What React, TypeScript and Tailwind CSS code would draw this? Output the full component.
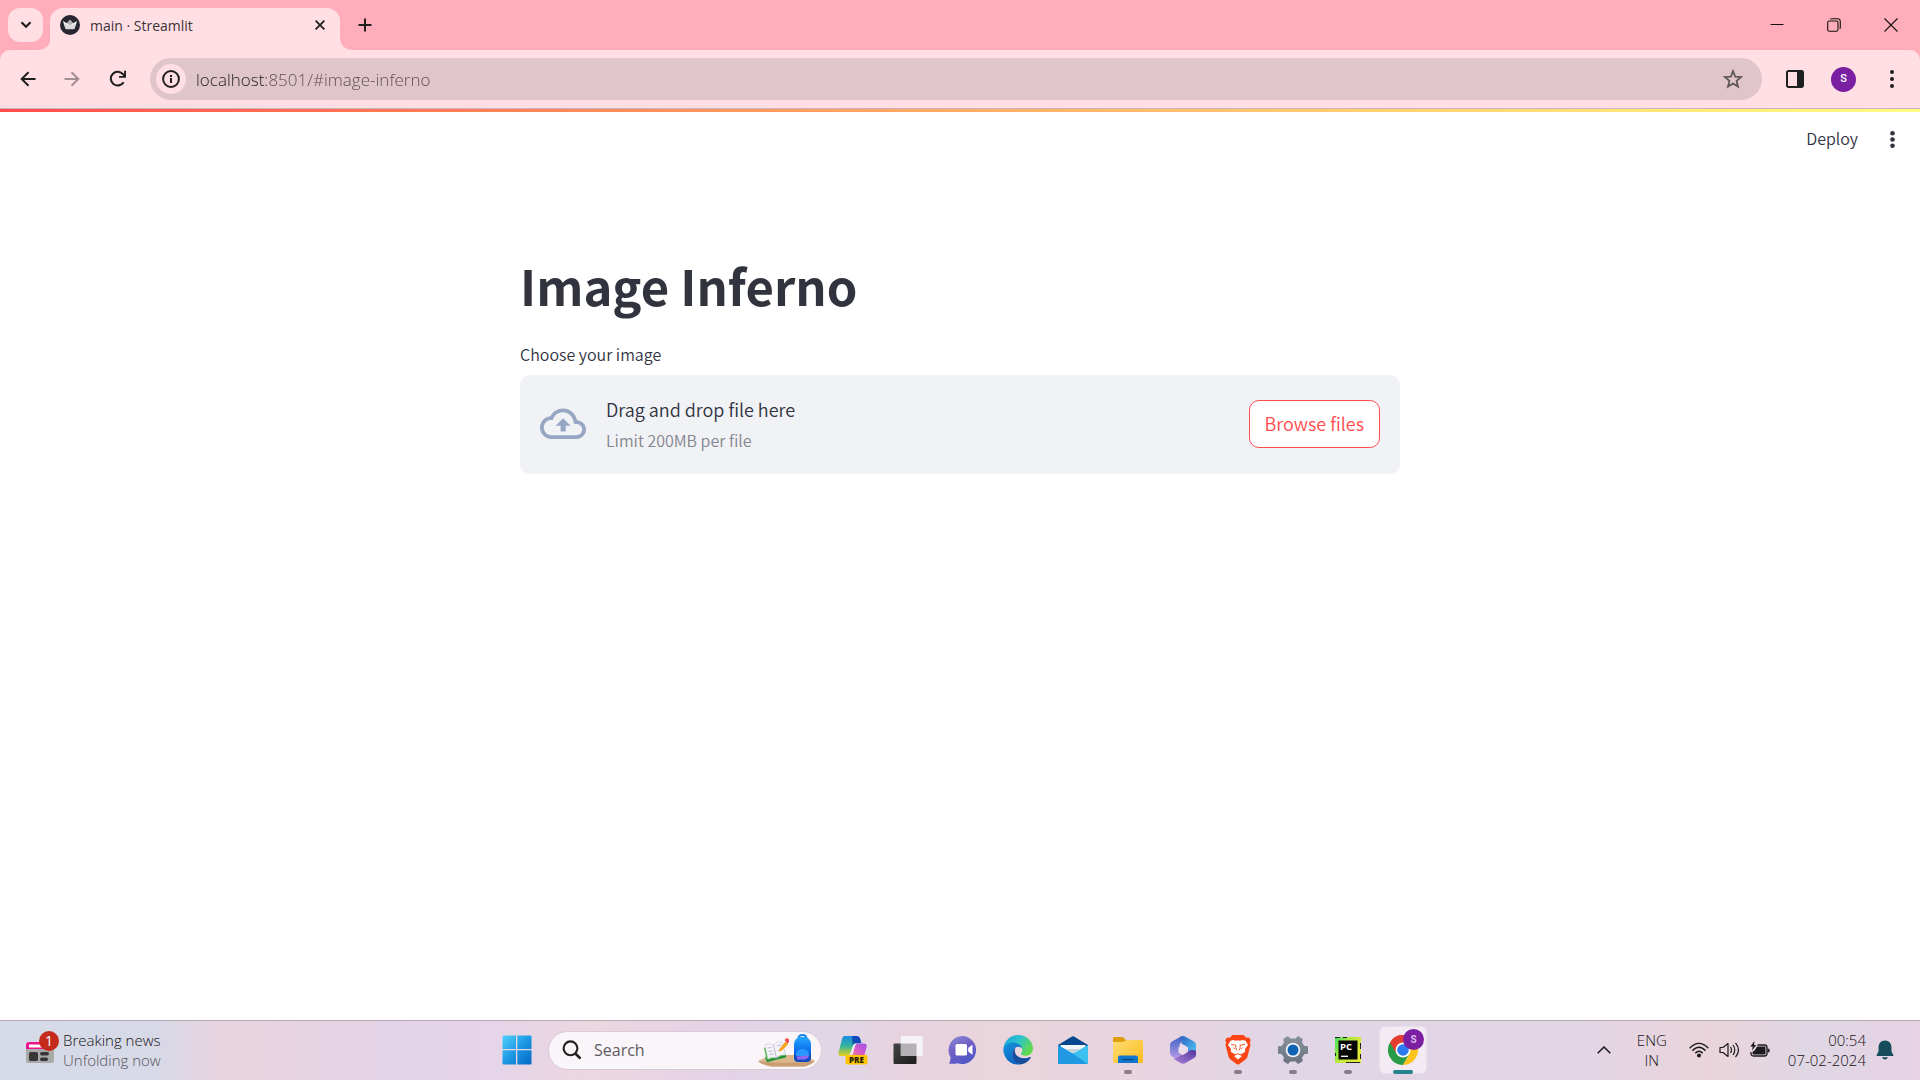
import React, { useRef } from "react";

const ICON = "flex h-12 w-12 shrink-0 items-center justify-center rounded-md";

function StreamlitLogo() {
  return (
    <svg viewBox="0 0 20 20" className="h-5 w-5 shrink-0" aria-hidden="true">
      <circle cx="10" cy="10" r="10" fill="#262730" />
      <path d="M2.800 6 7 8.300 10 4.800 13 8.300 17.200 6 15.200 11 4.800 11Z" fill="#f4f4f4" />
      <path d="M3.600 8.500 10 10.600 16.400 8.500 14.800 13.300Q14.500 14.300 13.600 14.300L6.400 14.300Q5.500 14.300 5.200 13.300Z" fill="#dcdcde" />
      <path d="M7 8.300 10 4.800 13 8.300 10 10.200Z" fill="#b0b1b5" />
    </svg>
  );
}

function TabStrip() {
  return (
    <div className="flex h-[50px] items-end bg-[#ffadbb]">
      <button aria-label="Search tabs" className="mb-2 ml-2 flex h-[34px] w-[35px] shrink-0 items-center justify-center rounded-xl bg-[#ffdee4]">
        <svg viewBox="0 0 12 8" className="h-2 w-3" fill="none" stroke="#1f1f1f" strokeWidth="2.2"><path d="M1.5 1.2 6 5.7 10.5 1.2" /></svg>
      </button>
      <div className="flex h-[42px] shrink-0 items-end">
        <svg viewBox="0 0 14 14" className="-mr-px ml-[-7px] h-[14px] w-[15px]" preserveAspectRatio="none" aria-hidden="true"><path d="M14 0V14H0Q14 14 14 0Z" fill="#ffdee4" /></svg>
        <div className="flex h-[42px] w-[290px] items-center rounded-t-[13px] bg-[#ffdee4] pr-[10px] pb-2 pl-[10px]">
          <StreamlitLogo />
          <span className="ml-[10px] flex-1 font-['Open_Sans','Noto_Sans',sans-serif] text-[14px] text-[#3b3437]">main · Streamlit</span>
          <button aria-label="Close tab" className="flex h-5 w-5 items-center justify-center">
            <svg viewBox="0 0 10 10" className="h-[10px] w-[10px]" stroke="#1f1f1f" strokeWidth="1.8"><path d="M.6.6 9.4 9.4M9.4.6.6 9.4" /></svg>
          </button>
        </div>
        <svg viewBox="0 0 14 14" className="h-[14px] w-[14px]" aria-hidden="true"><path d="M0 0V14H14Q0 14 0 0Z" fill="#ffdee4" /></svg>
      </div>
      <button aria-label="New tab" className="mb-[15px] ml-[1px] flex h-5 w-5 items-center justify-center">
        <svg viewBox="0 0 14 14" className="h-[14px] w-[14px]" stroke="#1f1f1f" strokeWidth="2"><path d="M7 .5V13.5M.5 7H13.5" /></svg>
      </button>
      <div className="ml-auto flex h-[50px] items-center">
        <button aria-label="Minimize" className="flex h-full w-[57px] items-center justify-center">
          <svg viewBox="0 0 14 14" className="h-[14px] w-[14px]" stroke="#111"><path d="M.5 6.5H13.5" /></svg>
        </button>
        <button aria-label="Restore" className="flex h-full w-[57px] items-center justify-center">
          <svg viewBox="0 0 14 14" className="h-[14px] w-[14px]" fill="none" stroke="#111" strokeWidth="1.1"><rect x=".7" y="3" width="10.3" height="10.3" rx="1.6" /><path d="M3.2 1.2Q3.8.7 5 .7H10.5Q13.3.7 13.3 3.5V9Q13.3 10.2 12.8 10.8" /></svg>
        </button>
        <button aria-label="Close window" className="flex h-full w-[58px] items-center justify-center">
          <svg viewBox="0 0 14 14" className="h-[14px] w-[14px]" stroke="#111" strokeWidth="1.1"><path d="M.5.5 13.5 13.5M13.5.5.5 13.5" /></svg>
        </button>
      </div>
    </div>
  );
}

function Toolbar() {
  return (
    <div className="bg-[#ffadbb]">
      <div className="flex h-[58px] items-center rounded-t-[10px] bg-[#ffdee4]">
        <button aria-label="Back" className="ml-[18px] flex h-5 w-5 items-center justify-center">
          <svg viewBox="0 0 16 16" className="h-4 w-4" fill="none" stroke="#1f1f1f" strokeWidth="2"><path d="M15.5 8H2M8.5 1.2 1.7 8 8.5 14.8" /></svg>
        </button>
        <button aria-label="Forward" className="ml-6 flex h-5 w-5 items-center justify-center">
          <svg viewBox="0 0 16 16" className="h-4 w-4" fill="none" stroke="#a38f94" strokeWidth="2"><path d="M.5 8H14M7.5 1.2 14.3 8 7.5 14.8" /></svg>
        </button>
        <button aria-label="Reload" className="ml-[26px] flex h-5 w-5 items-center justify-center">
          <svg viewBox="0 0 18 18" className="h-[18px] w-[18px]"><path d="M14.6 12.2A6.9 6.9 0 1 1 14.2 4.4L15.8 6" fill="none" stroke="#1f1f1f" strokeWidth="2.1" /><path d="M17 .8V7.8H10V5.9H15.1V.8Z" fill="#1f1f1f" /></svg>
        </button>
        <div className="ml-[22px] flex h-[42px] flex-1 items-center rounded-full bg-[#e0c5ca] pr-[18px] pl-[6px]">
          <button aria-label="Site information" className="flex h-[30px] w-[30px] shrink-0 items-center justify-center rounded-full bg-[#ffdee4]">
            <svg viewBox="0 0 18 18" className="h-[18px] w-[18px]"><circle cx="9" cy="9" r="7.9" fill="none" stroke="#1f1f1f" strokeWidth="2" /><path d="M8 8H10V13H8ZM8 5H10V7H8Z" fill="#1f1f1f" /></svg>
          </button>
          <input
            aria-label="Address"
            defaultValue="localhost:8501/#image-inferno"
            className="ml-[10px] min-w-0 flex-1 bg-[linear-gradient(90deg,#1f1c22_70px,#5a4b50_70px)] bg-clip-text pt-px font-['Open_Sans','Noto_Sans',sans-serif] text-[17px] font-[350] text-transparent caret-black outline-none"
          />
          <button aria-label="Bookmark this tab" className="flex h-[22px] w-[22px] items-center justify-center">
            <svg viewBox="0 0 20 20" className="h-5 w-5" fill="none" stroke="#5f5759" strokeWidth="1.8"><path d="M10 2.2 12.2 7.6 18 8.1 13.6 11.9 15 17.6 10 14.5 5 17.6 6.4 11.9 2 8.1 7.8 7.6Z" /></svg>
          </button>
        </div>
        <button aria-label="Side panel" className="ml-6 flex h-[18px] w-[18px] items-center justify-center">
          <svg viewBox="0 0 18 18" className="h-[18px] w-[18px]"><rect x="1" y="1" width="16" height="16" rx="1.4" fill="none" stroke="#1f1f1f" strokeWidth="2" /><path d="M11 1H17V17H11Z" fill="#1f1f1f" /></svg>
        </button>
        <button aria-label="Profile" className="ml-[27px] flex h-[25px] w-[25px] items-center justify-center rounded-full bg-[#7b1fa2] font-[Roboto,sans-serif] text-[11px] font-medium text-white">S</button>
        <button aria-label="Chrome menu" className="mr-[18px] ml-[26px] flex h-5 w-5 items-center justify-center">
          <svg viewBox="0 0 4 18" className="h-[18px] w-1" fill="#1f1f1f"><circle cx="2" cy="2" r="2" /><circle cx="2" cy="9" r="2" /><circle cx="2" cy="16" r="2" /></svg>
        </button>
      </div>
      <div className="h-px bg-[#ccb2bd]" />
    </div>
  );
}

function Page() {
  const file = useRef<HTMLInputElement>(null);
  return (
    <div className="flex-1 bg-white font-['Source_Sans_Pro','Noto_Sans_CJK_SC',sans-serif] font-[350] text-[#31333f]">
      <div className="h-[3px] bg-linear-to-r from-[#ff4b4b] to-[#fffd80]" />
      <header className="flex h-[54px] items-center justify-end pr-[18px]">
        <button className="pb-[2px] text-[16px] leading-6">Deploy</button>
        <button aria-label="Main menu" className="ml-6 flex h-5 w-5 items-center justify-center">
          <svg viewBox="0 0 5 17" className="h-[17px] w-[5px]" fill="#31333f"><circle cx="2.5" cy="2.3" r="2.3" /><circle cx="2.5" cy="8.5" r="2.3" /><circle cx="2.5" cy="14.7" r="2.3" /></svg>
        </button>
      </header>
      <main className="mx-auto max-w-[880px] pt-[86px]">
        <h1 className="pb-[23px] text-[49px] leading-[66px] font-bold">Image Inferno</h1>
        <label htmlFor="upload" className="block h-[30px] pb-1 text-[16px] leading-[26px]">Choose your image</label>
        <section className="mt-1 flex h-[99px] items-center rounded-[10px] bg-[#f0f2f6] px-5">
          <svg viewBox="0 0 46 32" className="mb-px h-8 w-[46px] shrink-0" aria-hidden="true">
            <path d="M37 12.2C35.7 5.400 30 .5 23 .5 17.400 .5 12.600 3.700 10.200 8.300 4.400 8.900 0 13.800 0 19.500 0 25.800 5.200 31 11.500 31H36.500C41.700 31 46 26.700 46 21.500 46 16.500 42.100 12.500 37 12.200ZM36.500 27.200H11.500C7.300 27.200 3.800 23.800 3.800 19.500 3.800 15.600 6.700 12.500 10.600 12.100L12.700 11.900 13.600 10C15.400 6.500 19 4.300 23 4.300 28.100 4.300 32.300 7.900 33.300 12.900L33.900 15.800 36.800 16C39.800 16.200 42.200 18.600 42.200 21.500 42.200 24.700 39.600 27.200 36.500 27.200ZM15.700 17.700H20.600V23.500H25.700V17.700H30.600L23.100 10.300Z" fill="#97a6c3" />
          </svg>
          <div className="ml-5 flex-1">
            <p className="text-[18px] leading-[31px]">Drag and drop file here</p>
            <p className="text-[16px] leading-[30px] text-[#84858e]">Limit 200MB per file</p>
          </div>
          <input ref={file} id="upload" type="file" className="hidden" />
          <button onClick={() => file.current?.click()} className="mb-px h-12 rounded-[10px] border border-[#ff4b4b] bg-white px-[15px] pb-[2px] text-[18px] leading-6 text-[#ff4b4b]">Browse files</button>
        </section>
      </main>
    </div>
  );
}

function Dot() {
  return <span className="absolute bottom-0 left-5 h-1 w-2 rounded-full bg-[#887c86]" />;
}

function TaskbarApps() {
  return (
    <nav aria-label="Taskbar" className="flex items-center gap-[7px]">
      <button aria-label="Start" className={ICON}>
        <svg viewBox="0 0 30 30" className="h-[30px] w-[30px]">
          <defs><linearGradient id="win" x1="0" y1="0" x2="1" y2="1"><stop offset="0" stopColor="#52d2fb" /><stop offset=".5" stopColor="#1b98e4" /><stop offset="1" stopColor="#0568c4" /></linearGradient></defs>
          <path d="M1.500.5H14V14H.5V1.500Q.5.5 1.500.5ZM15.300.5H28.500Q29.500.5 29.500 1.500V14H15.300ZM.5 15.300H14V29.500H1.500Q.5 29.500.5 28.500ZM15.300 15.300H29.500V28.500Q29.500 29.500 28.500 29.500H15.300Z" fill="url(#win)" />
        </svg>
      </button>
      <label className="flex h-[39px] w-[274px] items-center rounded-full border border-[#d9cbd6] bg-[#f9f5f9] pr-[6px] pl-[13px]">
        <svg viewBox="0 0 20 20" className="h-5 w-5 shrink-0" fill="none" stroke="#222" strokeWidth="2.1"><circle cx="8.500" cy="8.300" r="6.900" /><path d="M13.400 13.500 18.500 18.700" strokeWidth="2.600" /></svg>
        <input aria-label="Search" placeholder="Search" className="ml-3 min-w-0 flex-1 bg-transparent font-['Open_Sans','Noto_Sans',sans-serif] text-[16px] font-normal outline-none placeholder:text-[#5f5c60]" />
        <svg viewBox="0 0 58 34" className="h-[34px] w-[58px] shrink-0" aria-hidden="true">
          <defs><linearGradient id="bag" x1="0" y1="0" x2="0" y2="1"><stop offset="0" stopColor="#22a7ff" /><stop offset=".6" stopColor="#0a6be8" /><stop offset="1" stopColor="#0b3fae" /></linearGradient></defs>
          <path d="M14 22H47L58 28Q54 32 48 33.500H14Q5 32 1 28Z" fill="#dcb88c" /><path d="M1 28Q30 31.500 58 28 54 32 48 33.500H14Q5 32 1 28Z" fill="#c89f74" />
          <path d="M7 15 25 10.500 29.500 24.500 10 29Z" fill="#4fbd45" /><path d="M7.500 23 10 29 29 24 29 22 11 27Z" fill="#218c3b" />
          <path d="M8 12Q12 9.500 16.500 12 20 8 25 9L28.500 22Q23 21 19.500 25 14.500 23 11 26Z" fill="#f6f4fb" stroke="#c9c4d8" strokeWidth=".6" /><path d="M16.500 12 19.500 25M10.500 15 14.500 14.500M11.500 18.500 15.500 18M12.500 21.500 16.500 21M20 13 24 12M21 17.500 25 16.500" stroke="#a9a5bd" strokeWidth=".8" />
          <path d="M22.500 16 28.500 8.500 31 11.500 25 17.500 21.800 18.500Z" fill="#f8a51b" /><path d="M27.500 7Q29.500 4 32 6.500 32.500 8.500 30.500 11Z" fill="#f05252" />
          <path d="M41.500 6Q41.500 2 45.500 2T49.500 6" fill="none" stroke="#1684e8" strokeWidth="2" /><rect x="37" y="4" width="17" height="24.500" rx="7" fill="url(#bag)" /><path d="M37 21H54V25Q54 29 50 29H41Q37 29 37 25Z" fill="#124ec2" /><path d="M39 23V21Q40 16 45.500 16T52 21V23Z" fill="#2897ff" /><path d="M39.500 23.500 51.500 22.500V24.500L48 26.500H40.500Z" fill="#9068f4" />
        </svg>
      </label>
      <button aria-label="Copilot" className={ICON}>
        <svg viewBox="0 0 30 30" className="h-[30px] w-[30px]">
          <defs><linearGradient id="cp1" x1="0" y1="0" x2="0" y2="1"><stop offset="0" stopColor="#1a8be6" /><stop offset=".5" stopColor="#35b59a" /><stop offset="1" stopColor="#e8d01b" /></linearGradient><linearGradient id="cp2" x1="1" y1="0" x2="0" y2="1"><stop offset="0" stopColor="#9b4fe8" /><stop offset=".5" stopColor="#d95bc9" /><stop offset="1" stopColor="#ff9463" /></linearGradient></defs>
          <path d="M6.500 1H18.500Q21.500 1 22.500 5L23.500 8.500H18.500Q15.500 8.500 14.500 12L12.500 18Q11.500 21 8 21H3.500Q-.5 21 .7 17L4 4Q4.800 1 6.500 1Z" fill="url(#cp1)" /><path d="M14 1H18.500Q21.500 1 22.500 5L23.300 8H18Q15.500 8 14.700 10Z" fill="#124abb" />
          <path d="M18.500 8.500H25.500Q29.500 8.500 28.500 12.500L26.500 19.500Q25.500 23 22 23H11Q14 22 15 18.500L17 11Q17.600 9 18.500 8.500Z" fill="url(#cp2)" />
          <path d="M16 9.500Q17 8.300 18.500 8.500 17.300 9 16.800 11L15 18Q14 20.500 12 20.500H10.500Q12 20 12.700 18L14.500 12Q15 10.300 16 9.500Z" fill="#f0e8f4" />
          <rect x="7.500" y="20" width="22" height="9.500" rx="2" fill="#ffc400" /><text x="18.500" y="27.600" textAnchor="middle" fontFamily="Open Sans" fontSize="8" fontWeight="800" fill="#2a2205">PRE</text>
        </svg>
      </button>
      <button aria-label="Task view" className={ICON}>
        <svg viewBox="0 0 30 30" className="h-[30px] w-[30px]">
          <defs><linearGradient id="tv" x1="0" y1="0" x2="1" y2="1"><stop offset="0" stopColor="#454545" /><stop offset="1" stopColor="#1c1c1c" /></linearGradient></defs>
          <rect x=".5" y="8.500" width="23" height="20.500" rx="1" fill="url(#tv)" /><rect x="7.800" y="1" width="22" height="20" rx="1" fill="#f5f3f5" /><path d="M7.800 8.500H23.500V21H7.800Z" fill="#b4b2b4" />
        </svg>
      </button>
      <button aria-label="Chat" className={ICON}>
        <svg viewBox="0 0 30 30" className="h-[30px] w-[30px]">
          <defs><linearGradient id="ch" x1="0" y1="0" x2=".5" y2="1"><stop offset="0" stopColor="#8a8fd6" /><stop offset=".5" stopColor="#7260c6" /><stop offset="1" stopColor="#5058c8" /></linearGradient></defs>
          <path d="M15 1A14 14 0 1 1 9.500 28.200Q6 29.300 1 28.600 2.800 26 2.500 22A14 14 0 0 1 15 1Z" fill="url(#ch)" /><rect x="7.500" y="9" width="11.500" height="11.500" rx="1.500" fill="#fff" /><path d="M20.200 13 24 10Q24.500 10 24.500 10.600V19Q24.500 19.500 24 19.500L20.200 16.500Z" fill="#fff" />
        </svg>
      </button>
      <button aria-label="Microsoft Edge" className={ICON}>
        <svg viewBox="0 0 30 30" className="h-[30px] w-[30px]">
          <defs><linearGradient id="ed1" x1="0" y1="0" x2="1" y2=".5"><stop offset="0" stopColor="#18a0d8" /><stop offset=".5" stopColor="#2cc3d0" /><stop offset="1" stopColor="#62d94e" /></linearGradient><linearGradient id="ed2" x1="0" y1="0" x2=".5" y2="1"><stop offset="0" stopColor="#1695dd" /><stop offset="1" stopColor="#0c63be" /></linearGradient></defs>
          <path d="M.5 13C1.500 5.500 7.500 0 15.200 0 23.500 0 30 6 30 13.500 30 18 26.500 20.800 22.500 20.800 19.500 20.800 17.800 19.700 17.800 18.800 17.800 17.900 19.300 17.500 19.300 15 19.300 11.500 15.500 8 9.800 8 5.500 8 2 10 .5 13Z" fill="url(#ed1)" />
          <path d="M.3 15C0 10.500 4.500 7.400 9.500 7.400 15.500 7.400 19.400 11.200 19.400 14.800 19.400 13 17.500 11.600 15.300 11.800 11 12.200 8.500 17 10 21.500 11.300 25.800 15 28.500 19 29.200 8.500 31.500.8 24 .3 15Z" fill="url(#ed2)" />
          <path d="M12.500 12.800C9 15.500 8.500 20.500 10.500 24 13 28.500 17.500 29.700 20.500 28.700 23.700 27.600 26.300 25.300 27.700 22.700 28 22 27.600 21.800 27 22 20 25.200 12.200 22 11.900 16.500 11.800 15.200 12 13.800 12.500 12.800Z" fill="#164e9d" />
        </svg>
      </button>
      <button aria-label="Mail" className={ICON}>
        <svg viewBox="0 0 30 30" className="h-[30px] w-[30px]">
          <path d="M0 10 14 1.500Q15 1 16 1.500L30 10V15H0Z" fill="#07478d" /><path d="M2.500 10H27.500V20H2.500Z" fill="#f3f5f7" /><path d="M8 14 15 18 22 14Z" fill="#c8d0d8" /><path d="M0 10 30 29H1Q0 29 0 28Z" fill="#1793e0" /><path d="M30 10V28Q30 29 29 29H1L15 18.500Z" fill="#3bc0f0" /><path d="M0 10 15 18.500 29.500 29H1Q0 29 0 28Z" fill="#2099e2" />
        </svg>
      </button>
      <button aria-label="File Explorer" className={`${ICON} relative`}>
        <svg viewBox="0 0 30 30" className="h-[30px] w-[30px]">
          <defs><linearGradient id="fe" x1="0" y1="0" x2="1" y2="1"><stop offset="0" stopColor="#ffdf73" /><stop offset="1" stopColor="#fdba20" /></linearGradient></defs>
          <path d="M0 3Q0 2 1 2H10L13 5H29Q30 5 30 6V12H0Z" fill="#dfa010" /><path d="M0 7H10.500L13.500 5H29Q30 5 30 6V28H0Z" fill="url(#fe)" /><path d="M5 28V22.500Q5 20.500 7 20.500H23Q25 20.500 25 22.500V28Z" fill="#1277cc" /><path d="M9 24.500H21" stroke="#07437f" strokeWidth="1.300" />
        </svg>
        <Dot />
      </button>
      <button aria-label="Microsoft 365" className={ICON}>
        <svg viewBox="0 0 30 30" className="h-[30px] w-[30px]">
          <defs><linearGradient id="m1" x1="0" y1="0" x2="0" y2="1"><stop offset="0" stopColor="#3c62c4" /><stop offset="1" stopColor="#c3a0ea" /></linearGradient><linearGradient id="m2" x1="0" y1="0" x2="1" y2="1"><stop offset="0" stopColor="#2d62c4" /><stop offset="1" stopColor="#52c8f3" /></linearGradient><linearGradient id="m3" x1="0" y1="1" x2="1" y2="0"><stop offset="0" stopColor="#b083dd" /><stop offset="1" stopColor="#52379b" /></linearGradient></defs>
          <path d="M13 1.500 17 3 11.500 9.500V18L15 20.500 11 25.500 4 21.500Q2 20.300 2 18V10Q2 7.800 4 6.600Z" fill="url(#m1)" /><path d="M12.500 1.600Q15 .5 17.500 1.800L26 6.600Q28 7.800 28 10V18L20 19V12.500L13.500 8.500Q15 4 12.500 1.600Z" fill="url(#m2)" /><path d="M28 15.500V20Q28 22 26 23L17.500 28Q15 29.300 12.500 28L5 23.500Q7 24 9.500 22.500L20 16.300Q23 14 28 15.500Z" fill="url(#m3)" /><path d="M15 9.800 19.800 12.500V17L15 20 10.500 17.500V12.500Z" fill="#eadcea" />
        </svg>
      </button>
      <button aria-label="Brave" className={`${ICON} relative`}>
        <svg viewBox="0 0 30 30" className="h-[30px] w-[30px]">
          <path d="M9.500 0H20.500L23.200 2.800 25.700 2.500 27.800 5 26.800 7.500 27.500 9.700 24.500 21.500Q24 23.500 22.500 24.500L16.500 29Q15 30 13.500 29L7.500 24.500Q6 23.500 5.500 21.500L2.500 9.700 3.200 7.500 2.200 5 4.300 2.500 6.800 2.800Z" fill="#fb4415" /><path d="M10 5 13 5.800 15 5.300 17 5.800 20 5 22.500 5.800 25 10 21.800 14.200Q23 16 21.500 17.200L18 19.300 16.800 19 15 18.200 13.200 19 12 19.300 8.500 17.200Q7 16 8.200 14.200L5 10 7.500 5.800ZM11 21 15 19.300 19 21 15 24.500Z" fill="#fff" /><path d="M8 9.300 13 10.300 12.800 12.200 13.600 15.500M22 9.300 17 10.300 17.200 12.200 16.400 15.500M10.500 12.500 11.800 14M19.500 12.500 18.200 14" fill="none" stroke="#fb4415" strokeWidth=".9" />
        </svg>
        <Dot />
      </button>
      <button aria-label="Settings" className={`${ICON} relative`}>
        <svg viewBox="0 0 30 30" className="h-[30px] w-[30px]">
          <defs><linearGradient id="gear" x1="0" y1="0" x2="0" y2="1"><stop offset="0" stopColor="#87919b" /><stop offset="1" stopColor="#6a7480" /></linearGradient></defs>
          <path d="M5.800 3.500 9.500 1.300Q10.300 1 10.800 1.800L12.300 3.500H17.700L19.200 1.800Q19.700 1 20.500 1.300L24.200 3.500Q25 4 24.600 5L24 7.500 26.500 11H29Q30 11 30 12V18Q30 19 29 19H26.500L24 22.500 24.600 25Q25 26 24.200 26.500L20.500 28.700Q19.700 29 19.200 28.200L17.700 26.500H12.300L10.800 28.200Q10.300 29 9.500 28.700L5.800 26.500Q5 26 5.400 25L6 22.500 3.500 19H1Q0 19 0 18V12Q0 11 1 11H3.500L6 7.500 5.400 5Q5 4 5.800 3.500Z" fill="url(#gear)" /><circle cx="15" cy="15" r="7.300" fill="#f2f2f5" /><circle cx="15" cy="15" r="5.500" fill="#0e63b4" />
        </svg>
        <Dot />
      </button>
      <button aria-label="PyCharm" className={`${ICON} relative`}>
        <svg viewBox="0 0 30 30" className="h-[30px] w-[30px]">
          <defs><linearGradient id="pc" x1="0" y1="0" x2="1" y2=".6"><stop offset="0" stopColor="#3fe05f" /><stop offset=".5" stopColor="#b9e83b" /><stop offset="1" stopColor="#e6ea35" /></linearGradient></defs>
          <path d="M2 2H28V28H2Z" fill="url(#pc)" /><path d="M2 2.500H7M10 2.500H14M27.500 8V14M27.500 19V24M2.500 18V21M13 27.500H27" stroke="#222" strokeWidth="1" /><path d="M5.500 5.500H24.500V24.500H5.500Z" fill="#050805" /><text x="7" y="14.500" fontFamily="Open Sans" fontWeight="700" fontSize="9.500" fill="#fff">PC</text><path d="M8 21.300H15" stroke="#fff" strokeWidth="1.300" />
        </svg>
        <Dot />
      </button>
      <button aria-label="Google Chrome" className={`${ICON} relative border border-[#e9dfea] bg-[#f3ebf3]`}>
        <svg viewBox="0 0 30 30" className="h-[30px] w-[30px]">
          <path d="M15 15 2 7.500A15 15 0 0 1 28 7.500Z" fill="#e43e30" /><path d="M15 15 2 7.500A15 15 0 0 0 15 30L21.500 18.700Z" fill="#2a9c48" /><path d="M15 7.500H28A15 15 0 0 1 15 30L21.500 18.700Z" fill="#fcc31d" /><path d="M15 7.500H28A15 15 0 0 0 2 7.500L8.500 18.700Z" fill="#e43e30" /><circle cx="15" cy="15" r="7.500" fill="#fff" /><circle cx="15" cy="15" r="5.800" fill="#2c7bf0" />
        </svg>
        <span className="absolute top-[2px] right-[2px] flex h-[21px] w-[21px] items-center justify-center rounded-full bg-[#7b1fa2] font-[Roboto,sans-serif] text-[10px] font-bold text-[#d9b8e6]">S</span>
        <span className="absolute -bottom-px left-[13px] h-1 w-5 rounded-full bg-[#24838f]" />
      </button>
    </nav>
  );
}

function Taskbar() {
  return (
    <footer className="grid h-[60px] grid-cols-[1fr_auto_1fr] items-center border-t border-[#b5a9b4] bg-[linear-gradient(90deg,#d6dbe8_0%,#d7d9e7_8%,#e9d3de_12%,#e3d3e6_20%,#e6d5e8_26%,#ecd6df_31%,#e5d2e6_37%,#dfd6e6_43%,#e7d3df_47%,#ead5dc_52%,#e8d4e0_60%,#e1d6e5_67%,#e2d5e6_82%,#ead4da_89%,#e0d7e4_94%,#e6d2e3_100%)] pb-px font-['Open_Sans','Noto_Sans',sans-serif] text-[15px] leading-5 font-[350] text-[#151315]">
      <button className="flex items-center justify-self-start pb-px pl-[26px] text-left">
        <span className="relative h-[34px] w-[33px]">
          <svg viewBox="0 0 28 24" className="mt-2 h-6 w-7" aria-hidden="true">
            <path d="M0 8V4Q0 1 3 1H28V8Z" fill="#ee138c" /><path d="M3 3.500H16V6.500H3Z" fill="#fff" /><path d="M0 8H28V20Q28 22 26 22H2Q0 22 0 20Z" fill="#aaa9aa" /><rect x="3" y="11" width="9" height="9" rx="1.500" fill="#373737" /><rect x="14" y="11" width="9" height="3.500" rx="1.700" fill="#373737" /><rect x="14" y="16.500" width="8" height="3.500" rx="1.700" fill="#373737" />
          </svg>
          <span className="absolute -top-[2px] left-[13px] flex h-5 w-5 items-center justify-center rounded-full bg-[#c42b1c] text-[14px] font-normal text-white">1</span>
        </span>
        <span className="ml-1">
          <span className="block">Breaking news</span>
          <span className="block text-[#57535b]">Unfolding now</span>
        </span>
      </button>
      <TaskbarApps />
      <div className="flex items-center justify-self-end pr-[26px]">
        <button aria-label="Show hidden icons" className="flex h-6 w-4 items-center justify-center"><svg viewBox="0 0 14 8" className="h-2 w-[14px]" fill="none" stroke="#1c1a1c" strokeWidth="1.500"><path d="M.7 7.300 7 1 13.300 7.300" /></svg></button>
        <button className="ml-6 w-[32px] text-center">ENG<br />IN</button>
        <button aria-label="Network, volume and battery" className="ml-[21px] flex items-center gap-[10px]">
          <svg viewBox="0 0 20 16" className="h-4 w-5" fill="none" stroke="#1c1a1c" strokeWidth="1.400"><path d="M.7 6.200Q10-3.500 19.300 6.200M3.500 8.800Q10 1.800 16.500 8.800M6.300 11.300Q10 7.200 13.700 11.300" /><circle cx="10" cy="13.500" r="1.300" fill="#1c1a1c" /></svg>
          <svg viewBox="0 0 21 18" className="h-[18px] w-[21px]" fill="none" stroke="#1c1a1c" strokeWidth="1.200"><path d="M1 6.500H4L9 2.500V15.500L4 11.500H1Z" strokeLinejoin="round" /><path d="M11.500 6Q13.500 9 11.500 12M14 4Q17.500 9 14 14M16.500 1.800Q22.500 9 16.500 16.200" /></svg>
          <svg viewBox="0 0 20 18" className="h-[18px] w-5"><path d="M7.500 4H14.500Q17 4 17 6.500V12.500Q17 15 14.500 15H3.500Q1 15 1 12.500V11" fill="none" stroke="#1c1a1c" strokeWidth="1.300" /><path d="M7 5.500H14.500Q15.500 5.500 15.500 6.500V12.500Q15.500 13.500 14.500 13.500H3.500Q2.500 13.500 2.500 12.500V11L5 9Z" fill="#1c1a1c" /><path d="M17.500 7.500 19.500 8V11L17.500 11.500ZM4.500 0 .3 5.500H2.700L2 9.500 6.300 4H4Z" fill="#1c1a1c" /></svg>
        </button>
        <button className="ml-[18px] pb-px text-right">00:54<br />07-02-2024</button>
        <button aria-label="Notifications" className="ml-[10px]"><svg viewBox="0 0 18 20" className="h-5 w-[18px]" fill="#154d5d"><path d="M9 .5Q15 .8 15.500 7V11.500L17.500 15.300Q17.500 16 16.700 16H1.300Q.5 16 .5 15.300L2.500 11.500V7Q3 .8 9 .5ZM6 17.300H12Q11 19.500 9 19.500T6 17.300Z" /></svg></button>
      </div>
    </footer>
  );
}

export default function App() {
  return (
    <div className="flex min-h-screen flex-col">
      <TabStrip />
      <Toolbar />
      <Page />
      <Taskbar />
    </div>
  );
}
